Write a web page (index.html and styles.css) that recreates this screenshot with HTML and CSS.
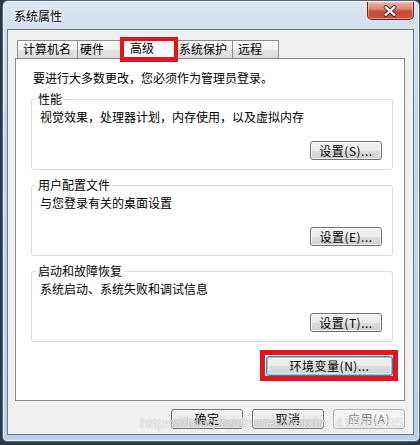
FILE: index.html
```html
<!DOCTYPE html>
<html lang="zh-CN">
<head>
<meta charset="utf-8">
<title>系统属性</title>
<link rel="stylesheet" href="styles.css">
</head>
<body>
<div class="window">
  <div class="titlebar">
    <span class="title">系统属性</span>
    <div class="close">
      <svg width="47" height="18" viewBox="0 0 47 18">
        <path d="M19 5 L28 13 M28 5 L19 13" stroke="#4b1c12" stroke-width="4" stroke-linecap="round" fill="none"/>
        <path d="M19 5 L28 13 M28 5 L19 13" stroke="#ffffff" stroke-width="2.2" stroke-linecap="round" fill="none"/>
      </svg>
    </div>
  </div>
  <div class="client">
    <div class="tabs">
      <div class="tab t1">计算机名</div>
      <div class="tab t2">硬件</div>
      <div class="tab sel">高级</div>
      <div class="tab t4">系统保护</div>
      <div class="tab t5">远程</div>
    </div>
    <div class="panel">
      <p class="note">要进行大多数更改，您必须作为管理员登录。</p>
      <fieldset class="group">
        <legend>性能</legend>
        <div class="gbody">
          <p class="desc">视觉效果，处理器计划，内存使用，以及虚拟内存</p>
          <button class="btn set">设置(S)...</button>
        </div>
      </fieldset>
      <fieldset class="group">
        <legend>用户配置文件</legend>
        <div class="gbody">
          <p class="desc">与您登录有关的桌面设置</p>
          <button class="btn set">设置(E)...</button>
        </div>
      </fieldset>
      <fieldset class="group">
        <legend>启动和故障恢复</legend>
        <div class="gbody">
          <p class="desc">系统启动、系统失败和调试信息</p>
          <button class="btn set">设置(T)...</button>
        </div>
      </fieldset>
      <div class="env-row">
        <div class="mark">
          <button class="btn env">环境变量(N)...</button>
        </div>
      </div>
    </div>
    <div class="footer">
      <button class="btn foot">确定</button>
      <button class="btn foot">取消</button>
      <button class="btn foot disabled" disabled>应用(A)</button>
    </div>
  </div>
  <div class="watermark">https://blog.csdn.net/weixin_41888295</div>
</div>
</body>
</html>
```
FILE: styles.css
```css
html, body {
  margin: 0;
  padding: 0;
}
body {
  width: 420px;
  height: 445px;
  overflow: hidden;
  background: #2e3844;
  font-family: "Noto Sans CJK SC", "Noto Sans", sans-serif;
  font-size: 12px;
  color: #000;
}
.window {
  box-sizing: border-box;
  margin-left: 2px;
  width: 418px;
  height: 442px;
  padding: 0 5px 6px 4px;
  border: 1px solid #55657a;
  border-radius: 6px 6px 5px 5px;
  background: linear-gradient(180deg, #dde7f2 0, #d3e0ee 28px, #c3d7ec 120px, #b9d1ea 100%);
  box-shadow: inset 0 0 0 1px rgba(255,255,255,0.6);
  display: flex;
  flex-direction: column;
  position: relative;
}
.titlebar {
  height: 28px;
  display: flex;
  align-items: flex-start;
  flex-shrink: 0;
}
.title {
  margin-top: 8px;
  padding-left: 7px;
  line-height: 14px;
  font-size: 12px;
  text-shadow: 0 0 6px #fff, 0 0 3px #fff;
}
.close {
  margin-left: auto;
  margin-top: 1px;
  width: 47px;
  height: 18px;
  box-sizing: border-box;
  border: 1px solid #6b2a1e;
  border-top: none;
  border-radius: 0 0 5px 5px;
  background: linear-gradient(180deg, #eab3a5 0, #dc8a76 40%, #c84a32 55%, #c9553a 100%);
  box-shadow: inset 0 0 0 1px rgba(255,210,200,0.5);
  display: flex;
  overflow: hidden;
}
.close svg {
  display: block;
  margin-left: -1px;
}
.client {
  flex: 1;
  border: 1px solid #6b7785;
  background: #f0f0f0;
  display: flex;
  flex-direction: column;
}
.tabs {
  height: 28px;
  flex-shrink: 0;
  display: flex;
  align-items: flex-end;
  padding-left: 9px;
}
.tab {
  box-sizing: border-box;
  height: 18px;
  border: 1px solid #898c95;
  border-bottom: none;
  background: linear-gradient(180deg, #fbfbfb 0, #f0f0f0 50%, #e3e3e3 51%, #dcdcdc 100%);
  line-height: 16px;
  font-size: 12px;
  white-space: nowrap;
}
.t1 { width: 61px; padding-left: 5px; }
.t2 { width: 45px; padding-left: 2px; margin-left: -1px; }
.t4 { width: 56px; padding-left: 1px; margin-left: -1px; }
.t5 { width: 47px; padding-left: 5px; margin-left: -1px; }
.tab.sel {
  width: 58px;
  height: 21px;
  margin-left: -2px;
  margin-bottom: -1px;
  padding-left: 9px;
  line-height: 18px;
  background: #fff;
  position: relative;
  z-index: 2;
}
.tab.sel::after {
  content: "";
  position: absolute;
  left: -1px;
  right: -1px;
  top: -2px;
  bottom: -3px;
  border: 4px solid #e5141c;
  border-bottom-width: 5px;
}
.panel {
  box-sizing: border-box;
  margin-left: 7px;
  width: 390px;
  height: 343px;
  flex-shrink: 0;
  border: 1px solid #898c95;
  background: #fff;
  padding: 12px 11px 0 15px;
  position: relative;
  z-index: 1;
}
.note {
  margin: 0 0 7px 0;
  padding-left: 2px;
  line-height: 14px;
}
.group {
  margin: 0 0 8px 0;
  padding: 4px 10px 9px 8px;
  border: 1px solid #d5dfe5;
  border-radius: 3px;
  min-inline-size: 0;
}
.group legend {
  margin-left: -4px;
  padding: 0 2px;
  line-height: 14px;
  font-size: 12px;
}
.gbody {
  display: flex;
  flex-direction: column;
}
.desc {
  margin: 0;
  line-height: 14px;
}
.btn {
  box-sizing: border-box;
  height: 19px;
  padding: 0;
  font-family: "Noto Sans CJK SC", "Noto Sans", sans-serif;
  font-size: 12px;
  line-height: 16px;
  color: #000;
  border: 1px solid #707070;
  border-radius: 3px;
  background: linear-gradient(180deg, #f2f2f2 0, #ebebeb 50%, #dddddd 51%, #cfcfcf 100%);
  box-shadow: inset 0 0 0 1px rgba(255,255,255,0.75);
  letter-spacing: 0.5px;
}
.set {
  align-self: flex-end;
  width: 72px;
  margin-top: 17px;
}
.env-row {
  display: flex;
  justify-content: flex-end;
  margin-top: 6px;
  margin-right: -5px;
}
.mark {
  display: flex;
  border: 5px solid #e5141c;
  padding: 1px 0 0 1px;
}
.env {
  width: 127px;
  height: 20px;
  border-color: #3c7fb1;
  box-shadow: inset 0 0 0 1px #74d0f5, inset 0 0 0 2px rgba(255,255,255,0.6);
}
.footer {
  display: flex;
  justify-content: flex-end;
  gap: 9px;
  margin-top: 8px;
  padding-right: 8px;
}
.foot {
  width: 72px;
  height: 20px;
}
.foot.disabled {
  color: #838383;
  border-color: #adb2b5;
  background: #f4f4f4;
  box-shadow: none;
}
.watermark {
  position: absolute;
  left: 137px;
  top: 413px;
  font-family: "Liberation Sans", sans-serif;
  font-size: 15.5px;
  line-height: 18px;
  color: rgba(255,255,255,0.7);
  text-shadow: 0 0 1px rgba(90,90,90,0.45);
  white-space: nowrap;
  pointer-events: none;
  z-index: 5;
}
```
